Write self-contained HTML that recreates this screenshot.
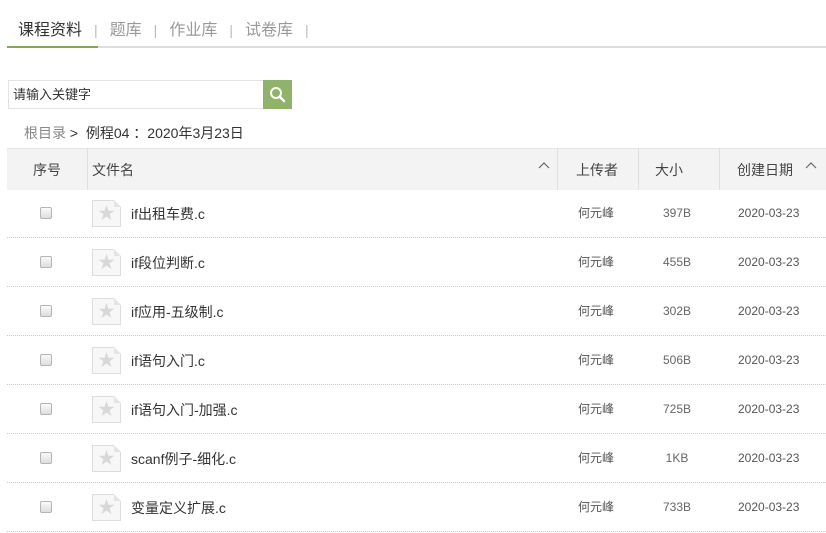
<!DOCTYPE html>
<html><head><meta charset="utf-8"><style>
body{margin:0;width:826px;height:533px;overflow:hidden;background:#fff;font-family:"Liberation Sans","Noto Sans CJK SC",sans-serif;color:#333;position:relative}
.abs{position:absolute}
.tabs{left:18px;top:16px;font-size:16px;color:#999;white-space:nowrap}
.tabs span.sep{color:#bbb;margin:0 12px;font-size:14px}
.uline{left:7px;top:46px;width:819px;height:2px;background:#ddd}
.ugreen{left:7px;top:46px;width:91px;height:2px;background:#8aa35b}
.search{left:8px;top:80px;border:1px solid #e3e3e3;font-size:13px;line-height:27px;padding-left:4px;box-sizing:border-box;width:256px;height:29px;color:#333}
.btn{left:263px;top:80px;width:29px;height:29px;background:#90b36a}
.bc{left:24px;top:123px;font-size:14px;color:#333}
.head{left:7px;top:148px;width:819px;height:41px;background:#f3f3f3;border-top:1px solid #e6e6e6}
.vl{top:148px;width:1px;height:42px;background:#e0e0e0}
.hd{top:160px;font-size:14px;color:#444}
.row{left:7px;width:819px;height:49px;border-bottom:1px dotted #c8c8c8;box-sizing:border-box}
.cb{position:absolute;left:33px;top:18px;width:10px;height:10px;border:1px solid #b5b5b5;border-radius:2px;background:linear-gradient(#fafafa,#ddd)}
.ic{position:absolute;left:85px;top:11px;width:29px;height:27px;border:1px solid #ddd;background:#f7f7f7;box-sizing:border-box}
.ic:after{content:"";position:absolute;right:-1px;top:-1px;border-style:solid;border-width:0 7px 7px 0;border-color:#fff #fff #e4e4e4 #e4e4e4}
.ic b{position:absolute;left:5px;top:3px;font-size:17px;line-height:19px;color:#d8d8d8;font-weight:normal}
.nm{position:absolute;left:124px;top:15px;font-size:14px;color:#333}
.up,.sz,.dt{position:absolute;top:17px;font-size:12px;line-height:15px;color:#555}
.up{left:571px}.sz{left:650px;width:40px;text-align:center;color:#666}.dt{left:731px}
</style></head><body>
<div class="abs tabs"><span style="color:#333">课程资料</span><span class="sep">|</span>题库<span class="sep">|</span>作业库<span class="sep">|</span>试卷库<span class="sep">|</span></div>
<div class="abs uline"></div><div class="abs ugreen"></div>
<div class="abs search">请输入关键字</div>
<div class="abs btn"><svg width="29" height="29" viewBox="0 0 29 29"><circle cx="13" cy="13" r="5" fill="none" stroke="#fff" stroke-width="2"/><path d="M16.5 16.5L21 21" stroke="#fff" stroke-width="2.5" stroke-linecap="round"/></svg></div>
<div class="abs bc"><span style="color:#888">根目录</span> &gt;&nbsp; 例程04 ：2020年3月23日</div>
<div class="abs head"></div>
<div class="abs vl" style="left:87px"></div><div class="abs vl" style="left:557px"></div><div class="abs vl" style="left:638px"></div><div class="abs vl" style="left:719px"></div>
<div class="abs hd" style="left:33px">序号</div>
<div class="abs hd" style="left:92px">文件名</div>
<svg class="abs" style="left:538px;top:161px" width="12" height="8"><path d="M1 7L6 2L11 7" fill="none" stroke="#666" stroke-width="1.2"/></svg>
<div class="abs hd" style="left:576px">上传者</div>
<div class="abs hd" style="left:655px">大小</div>
<div class="abs hd" style="left:737px">创建日期</div>
<svg class="abs" style="left:805px;top:161px" width="12" height="8"><path d="M1 7L6 2L11 7" fill="none" stroke="#666" stroke-width="1.2"/></svg>

<div class="abs row" style="top:189px"><i class="cb"></i><div class="ic"><b>★</b></div><span class="nm">if出租车费.c</span><span class="up">何元峰</span><span class="sz">397B</span><span class="dt">2020-03-23</span></div>
<div class="abs row" style="top:238px"><i class="cb"></i><div class="ic"><b>★</b></div><span class="nm">if段位判断.c</span><span class="up">何元峰</span><span class="sz">455B</span><span class="dt">2020-03-23</span></div>
<div class="abs row" style="top:287px"><i class="cb"></i><div class="ic"><b>★</b></div><span class="nm">if应用-五级制.c</span><span class="up">何元峰</span><span class="sz">302B</span><span class="dt">2020-03-23</span></div>
<div class="abs row" style="top:336px"><i class="cb"></i><div class="ic"><b>★</b></div><span class="nm">if语句入门.c</span><span class="up">何元峰</span><span class="sz">506B</span><span class="dt">2020-03-23</span></div>
<div class="abs row" style="top:385px"><i class="cb"></i><div class="ic"><b>★</b></div><span class="nm">if语句入门-加强.c</span><span class="up">何元峰</span><span class="sz">725B</span><span class="dt">2020-03-23</span></div>
<div class="abs row" style="top:434px"><i class="cb"></i><div class="ic"><b>★</b></div><span class="nm">scanf例子-细化.c</span><span class="up">何元峰</span><span class="sz">1KB</span><span class="dt">2020-03-23</span></div>
<div class="abs row" style="top:483px"><i class="cb"></i><div class="ic"><b>★</b></div><span class="nm">变量定义扩展.c</span><span class="up">何元峰</span><span class="sz">733B</span><span class="dt">2020-03-23</span></div>
</body></html>
